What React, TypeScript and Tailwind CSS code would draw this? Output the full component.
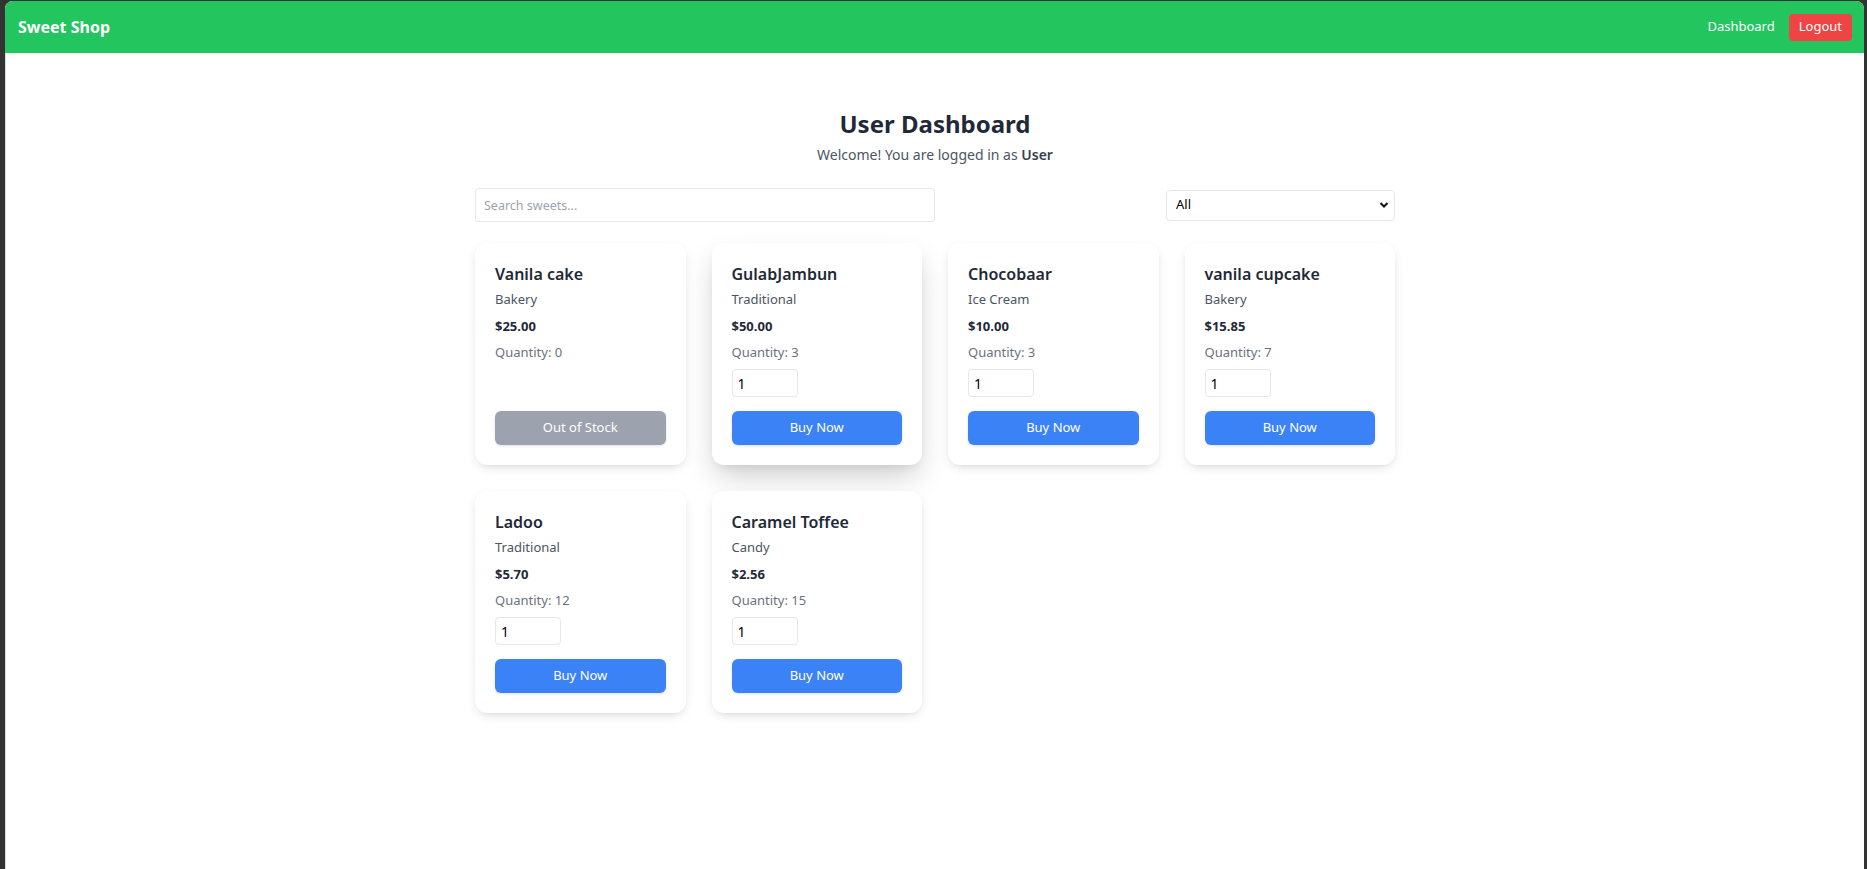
import { useState } from "react";

const sweets = [
    { name: "Vanila cake", category: "Bakery", price: 25, quantity: 0 },
    { name: "GulabJambun", category: "Traditional", price: 50, quantity: 3 },
    { name: "Chocobaar", category: "Ice Cream", price: 10, quantity: 3 },
    { name: "vanila cupcake", category: "Bakery", price: 15.85, quantity: 7 },
    { name: "Ladoo", category: "Traditional", price: 5.7, quantity: 12 },
    { name: "Caramel Toffee", category: "Candy", price: 2.56, quantity: 15 },
];

const SweetCard = ({ sweet, hovered }: { sweet: any; hovered?: boolean }) => {
    const [amount, setAmount] = useState("1");
    const soldOut = sweet.quantity === 0;

    return (
        <div
            className={`flex flex-col rounded-xl bg-white p-5 ${
                hovered ? "shadow-[0_14px_30px_-4px_rgba(0,0,0,0.2),0_4px_10px_-4px_rgba(0,0,0,0.1)]" : "shadow-[0_4px_12px_-2px_rgba(0,0,0,0.12),0_2px_4px_-2px_rgba(0,0,0,0.08)]"
            }`}
        >
            <div className="flex-1">
                <h3 className="text-[16px] leading-[22px] font-semibold text-[#1f2937]">{sweet.name}</h3>
                <p className="mt-[5px] text-[13px] leading-[18px] text-[#4b5563]">{sweet.category}</p>
                <p className="mt-[9px] text-[13px] leading-[18px] font-bold text-[#1f2937]">${sweet.price.toFixed(2)}</p>
                <p className="mt-[8px] text-[13px] leading-[18px] text-[#6b7280]">Quantity: {sweet.quantity}</p>
                {!soldOut && (
                    <input
                        type="number"
                        value={amount}
                        onChange={(e) => setAmount(e.target.value)}
                        className="mt-[8px] block h-[28px] w-[66px] rounded-[4px] border border-[#e5e7eb] px-[5px] text-[14px] text-black outline-none [appearance:textfield]"
                    />
                )}
            </div>
            <button
                disabled={soldOut}
                className={`mt-[14px] h-[34px] w-full rounded-md text-[13px] text-white shadow-[0_1px_3px_rgba(0,0,0,0.12)] ${
                    soldOut ? "bg-[#9ca3af]" : "bg-[#3b82f6]"
                }`}
            >
                {soldOut ? "Out of Stock" : "Buy Now"}
            </button>
        </div>
    );
};

const App = () => {
    const [search, setSearch] = useState("");
    const [category, setCategory] = useState("All");

    return (
        <div className="min-h-screen bg-[#333333] pl-[5px] pr-[3px] pt-px font-['Noto_Sans',sans-serif]">
            <div className="flex min-h-[868px] flex-col overflow-hidden rounded-t-[8px] bg-white">
                <nav className="flex h-[52px] items-center justify-between bg-[#22c55e] pl-[13px] pr-[12px]">
                    <span className="text-[16px] font-bold text-white">Sweet Shop</span>
                    <div className="flex items-center gap-[14px]">
                        <a className="text-[13px] text-white">Dashboard</a>
                        <button className="h-[27px] rounded-[4px] bg-[#ef4444] px-[10px] text-[13px] text-white">
                            Logout
                        </button>
                    </div>
                </nav>

                <main className="flex-1 border-l border-[#dddddd] pt-[55px]">
                    <div className="mx-auto w-[920px]">
                        <h1 className="text-center text-[24px] leading-[32px] font-bold text-[#1f2937]">User Dashboard</h1>
                        <p className="mt-[3px] text-center text-[14px] leading-[24px] text-[#4b5563]">
                            Welcome! You are logged in as <span className="font-semibold text-[#374151]">User</span>
                        </p>

                        <div className="mt-[21px] flex items-center justify-between">
                            <input
                                value={search}
                                onChange={(e) => setSearch(e.target.value)}
                                placeholder="Search sweets..."
                                className="h-[34px] w-[460px] rounded-[3px] border border-[#e5e7eb] px-[8px] text-[12.5px] text-[#1f2937] outline-none placeholder:text-[#9ca3af]"
                            />
                            <div className="relative w-[229px]">
                                <select
                                    value={category}
                                    onChange={(e) => setCategory(e.target.value)}
                                    className="h-[31px] w-full appearance-none rounded-[4px] border border-[#e5e7eb] bg-white pl-[9px] text-[13px] text-black outline-none"
                                >
                                    <option>All</option>
                                    <option>Bakery</option>
                                    <option>Traditional</option>
                                    <option>Ice Cream</option>
                                    <option>Candy</option>
                                </select>
                                <svg
                                    className="pointer-events-none absolute right-[6px] top-[11px]"
                                    width="10"
                                    height="8"
                                    viewBox="0 0 10 8"
                                >
                                    <path d="M1.5 2 L5 5.5 L8.5 2" fill="none" stroke="#111" strokeWidth="2" />
                                </svg>
                            </div>
                        </div>

                        <div className="mt-[21px] grid grid-cols-4 gap-[26px]">
                            {sweets.map((sweet, ind) => (
                                <SweetCard key={ind} sweet={sweet} hovered={ind === 1} />
                            ))}
                        </div>
                    </div>
                </main>
            </div>
        </div>
    );
};

export default App;
